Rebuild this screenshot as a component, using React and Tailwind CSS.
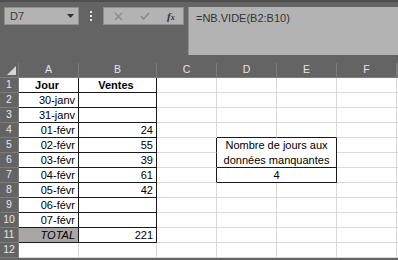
import React from "react";

const rows = [
  { a: "Jour", b: "Ventes", head: true },
  { a: "30-janv", b: "" },
  { a: "31-janv", b: "" },
  { a: "01-févr", b: "24" },
  { a: "02-févr", b: "55" },
  { a: "03-févr", b: "39" },
  { a: "04-févr", b: "61" },
  { a: "05-févr", b: "42" },
  { a: "06-févr", b: "" },
  { a: "07-févr", b: "" },
  { a: "TOTAL", b: "221", total: true },
  { a: "", b: "" },
];

const font = { fontFamily: '"Liberation Sans", Arial, sans-serif' };

export default function App() {
  return (
    <div className="w-[398px] h-[260px] overflow-hidden bg-[#646464] text-[11px]" style={font}>
      {/* top bar */}
      <div className="h-[2px] bg-[#4e4e4e]" />
      <div className="flex h-[53px] pt-[5px]">
        <div className="ml-[4px] w-[75px] h-[18px] bg-[#b3b3b3] border border-[#8e8e8e] flex items-center justify-between pl-[5px] pr-[4px] text-[#3a3a3a]">
          <span>D7</span>
          <svg width="7" height="4" viewBox="0 0 7 4"><path d="M0 0 H7 L3.5 4 Z" fill="#333" /></svg>
        </div>
        <div className="w-[24px] h-[18px] flex flex-col items-center justify-center gap-[2px]">
          <div className="w-[2px] h-[2px] bg-[#e8e8e8]" />
          <div className="w-[2px] h-[2px] bg-[#e8e8e8]" />
          <div className="w-[2px] h-[2px] bg-[#e8e8e8]" />
        </div>
        <div className="w-[81px] h-[18px] bg-[#b3b3b3] border border-[#8e8e8e] flex items-center">
          <svg className="ml-[10px]" width="9" height="9" viewBox="0 0 9 9"><path d="M1 1 L8 8 M8 1 L1 8" stroke="#8a8a8a" strokeWidth="1.2" /></svg>
          <svg className="ml-[17px]" width="10" height="8" viewBox="0 0 10 8"><path d="M0.8 4 L3.6 7 L9.2 0.8" stroke="#8a8a8a" strokeWidth="1.6" fill="none" /></svg>
          <span className="ml-[17px] italic text-[#333] font-bold text-[11px]" style={{ fontFamily: '"Liberation Serif", serif' }}>f<span className="text-[8px]">x</span></span>
        </div>
        <div className="ml-[4px] flex-1 h-[48px] bg-[#b3b3b3] border-l border-[#8e8e8e] pl-[7px] pt-[3px] text-[#333] text-[11px]">
          =NB.VIDE(B2:B10)
        </div>
      </div>
      <div className="h-[8px]" />
      {/* sheet */}
      <div className="grid grid-cols-[19px_60px_78px_60px_60px_60px_60px_1fr] auto-rows-[15px]">
        {/* header row */}
        <div className="relative bg-[#646464] border-r border-b border-[#7c7c7c]">
          <svg className="absolute right-[2px] bottom-[2px]" width="9" height="9" viewBox="0 0 9 9"><path d="M9 0 V9 H0 Z" fill="#d6d6d6" /></svg>
        </div>
        {["A", "B", "C", "D", "E", "F", ""].map((c, i) => (
          <div key={i} className="bg-[#646464] border-r border-b border-[#7c7c7c] flex items-center justify-center text-[#e4e4e4] text-[10.5px]">
            {c}
          </div>
        ))}
        {rows.map((r, i) => {
          const n = i + 1;
          const inTable = n <= 11;
          const cells = [];
          cells.push(
            <div key="h" className="bg-[#646464] border-r border-b border-[#7c7c7c] flex items-center justify-center text-[#e4e4e4] text-[10.5px]">
              {n}
            </div>
          );
          cells.push(
            <div
              key="a"
              className={`border-r border-b flex items-center pr-[3px] text-black ${
                inTable ? "border-[#1a1a1a]" : "border-[#d9d9d9]"
              } ${r.head ? "justify-center font-bold" : "justify-end"} ${r.total ? "bg-[#a9a6a6] italic" : "bg-white"}`}
            >
              {r.a}
            </div>
          );
          cells.push(
            <div
              key="b"
              className={`bg-white border-r border-b flex items-center pr-[3px] text-black ${
                inTable ? "border-[#1a1a1a]" : "border-[#d9d9d9]"
              } ${r.head ? "justify-center font-bold" : "justify-end"}`}
            >
              {r.b}
            </div>
          );
          const boxRow = n >= 5 && n <= 7;
          cells.push(
            <div key="c" className={`bg-white border-r border-b ${boxRow ? "border-r-[#1a1a1a] border-b-[#d9d9d9]" : "border-[#d9d9d9]"}`} />
          );
          if (n === 4) {
            cells.push(<div key="d" className="bg-white border-r border-b border-[#d9d9d9] border-b-[#1a1a1a]" />);
            cells.push(<div key="e" className="bg-white border-r border-b border-[#d9d9d9] border-b-[#1a1a1a]" />);
          } else if (n === 5) {
            cells.push(
              <div key="de" className="col-span-2 row-span-2 bg-white border-r border-b border-[#1a1a1a] flex flex-col items-center justify-center leading-[15px] text-black">
                <span>Nombre de jours aux</span>
                <span>données manquantes</span>
              </div>
            );
          } else if (n === 6) {
            // covered by row-span
          } else if (n === 7) {
            cells.push(
              <div key="de" className="col-span-2 bg-white border-r border-b border-[#1a1a1a] flex items-center justify-center text-black">
                4
              </div>
            );
          } else {
            cells.push(<div key="d" className="bg-white border-r border-b border-[#d9d9d9]" />);
            cells.push(<div key="e" className="bg-white border-r border-b border-[#d9d9d9]" />);
          }
          cells.push(<div key="f" className="bg-white border-r border-b border-[#d9d9d9]" />);
          cells.push(<div key="g" className="bg-white border-b border-[#d9d9d9]" />);
          return <React.Fragment key={i}>{cells}</React.Fragment>;
        })}
      </div>
    </div>
  );
}
